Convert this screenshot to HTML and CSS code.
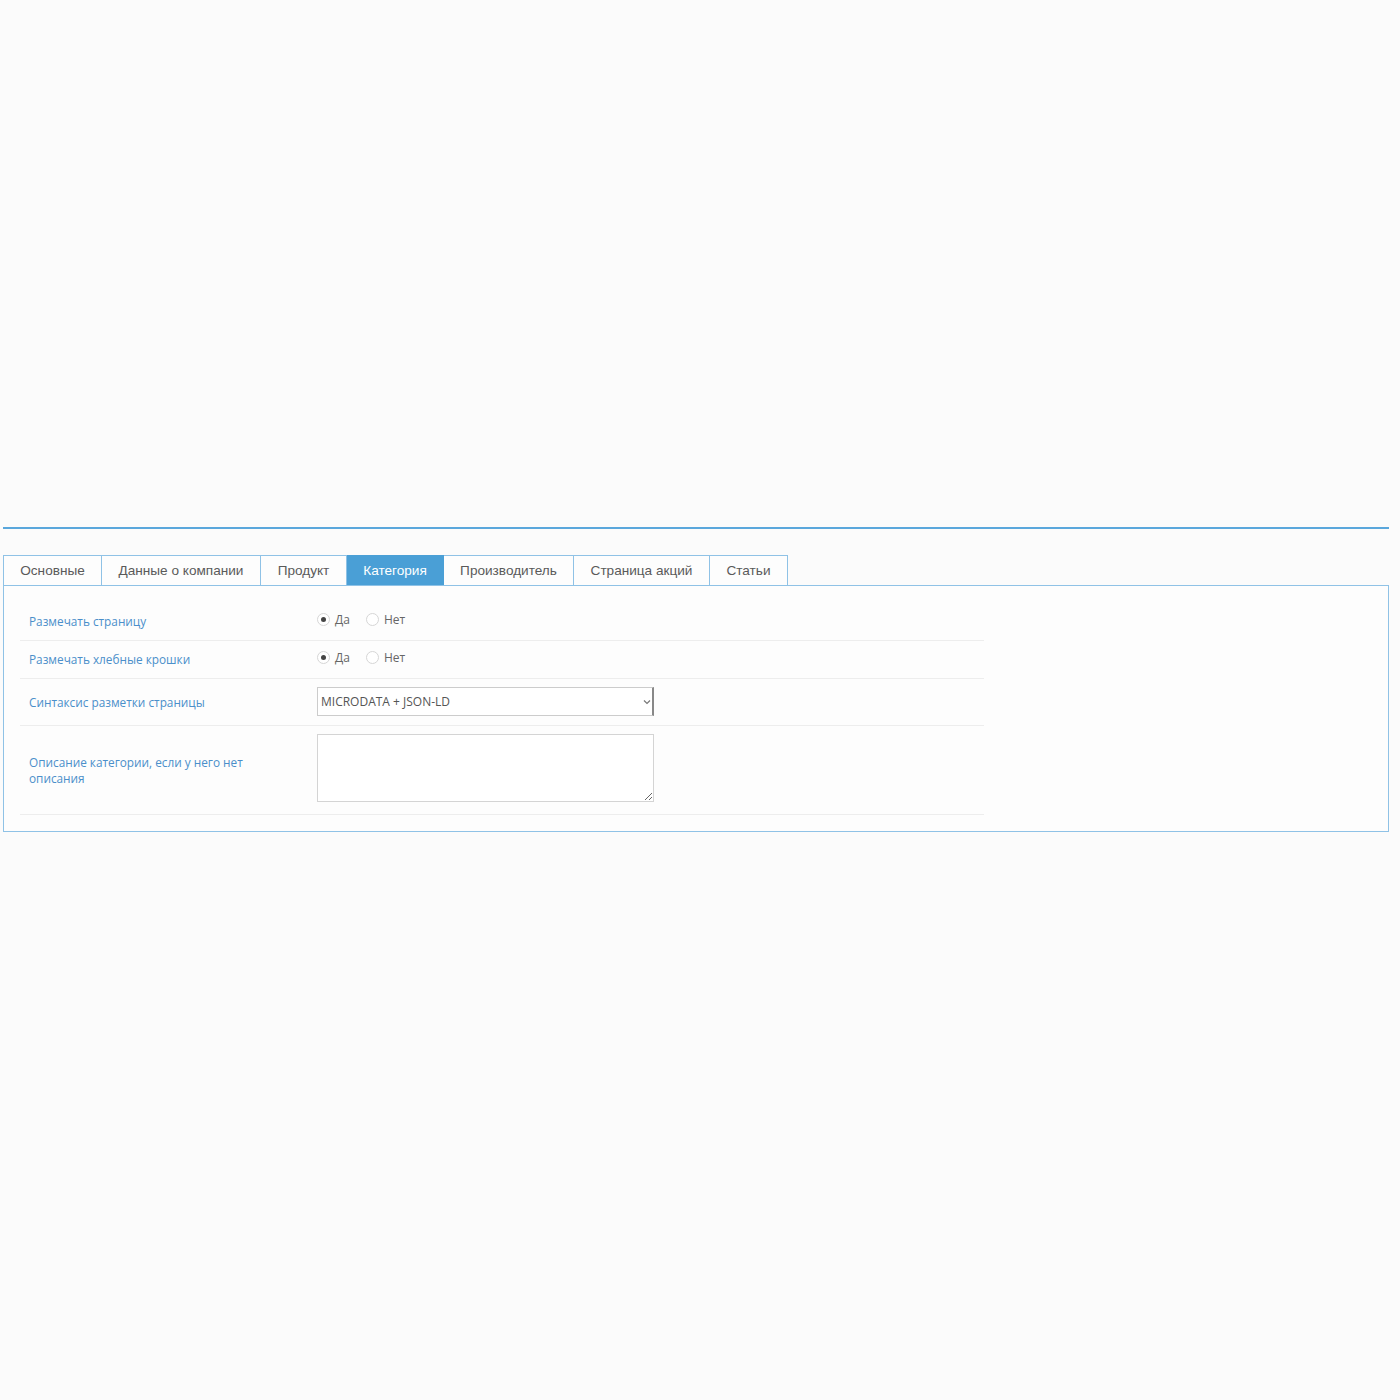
FILE: index.html
```html
<!DOCTYPE html>
<html lang="ru">
<head>
  <meta charset="UTF-8" />
  <title>Микроразметка – Категория</title>
  <link rel="stylesheet" href="styles.css">
</head>
<body>
  <div class="page">
    <div class="top-line"></div>

    <ul class="tabs">
      <li class="tab">Основные</li>
      <li class="tab">Данные о компании</li>
      <li class="tab">Продукт</li>
      <li class="tab active">Категория</li>
      <li class="tab">Производитель</li>
      <li class="tab">Страница акций</li>
      <li class="tab">Статьи</li>
    </ul>

    <div class="panel">
      <div class="form-row">
        <label class="row-label">Размечать страницу</label>
        <div class="row-field radios">
          <span class="radio checked"></span><span class="radio-text">Да</span>
          <span class="radio"></span><span class="radio-text">Нет</span>
        </div>
      </div>

      <div class="form-row">
        <label class="row-label">Размечать хлебные крошки</label>
        <div class="row-field radios">
          <span class="radio checked"></span><span class="radio-text">Да</span>
          <span class="radio"></span><span class="radio-text">Нет</span>
        </div>
      </div>

      <div class="form-row select-row">
        <label class="row-label">Синтаксис разметки страницы</label>
        <div class="row-field">
          <div class="select">
            <span>MICRODATA + JSON-LD</span>
            <svg class="chevron" width="8" height="6" viewBox="0 0 8 6">
              <path d="M1 1.5 L4 4.5 L7 1.5" fill="none" stroke="#777" stroke-width="1.2"/>
            </svg>
          </div>
        </div>
      </div>

      <div class="form-row tall">
        <label class="row-label">Описание категории, если у него нет описания</label>
        <div class="row-field">
          <textarea class="textarea"></textarea>
        </div>
      </div>
    </div>
  </div>
</body>
</html>
```

FILE: styles.css
```css
body {
  margin: 0;
  background: #fbfbfb;
  font-family: "Open Sans", Arial, sans-serif;
}

.page {
  padding: 527px 11px 0 3px;
}

.top-line {
  height: 2px;
  background: #5aa7dc;
  margin-bottom: 26px;
}

.tabs {
  list-style: none;
  margin: 0;
  padding: 0;
  display: flex;
}

.tab {
  height: 29px;
  line-height: 29px;
  padding: 0;
  text-align: center;
  border: 1px solid #8fc2e6;
  border-left: none;
  border-bottom: none;
  background: #fdfdfd;
  font-family: "Liberation Sans", Arial, sans-serif;
  font-size: 13.6px;
  color: #5a5a5a;
}

.tab:first-child {
  border-left: 1px solid #8fc2e6;
}

.tab:nth-child(1) { width: 97px; }
.tab:nth-child(2) { width: 158px; }
.tab:nth-child(3) { width: 85px; }
.tab:nth-child(4) { width: 96px; }
.tab:nth-child(5) { width: 129px; }
.tab:nth-child(6) { width: 135px; }
.tab:nth-child(7) { width: 77px; }

.tab.active {
  background: #4a9fd6;
  border-color: #4a9fd6;
  color: #fff;
}

.panel {
  border: 1px solid #8fc2e6;
  background: #fdfdfd;
  padding: 17px 0 16px 16px;
}

.form-row {
  width: 964px;
  display: grid;
  grid-template-columns: 297px 1fr;
  align-items: center;
  border-bottom: 1px solid #ededed;
  padding: 9px 0 8px;
  min-height: 20px;
}

.form-row.select-row {
  padding: 8px 0 9px;
}

.form-row.tall {
  padding: 8px 0 12px;
}

.row-label {
  padding-left: 9px;
  width: 240px;
  margin-top: -2px;
  font-size: 11.8px;
  line-height: 16px;
  color: #4b8fca;
}

.form-row.select-row .row-label {
  margin-top: 0;
}

.form-row.tall .row-label {
  margin-top: 4px;
}

.radios {
  display: flex;
  align-items: center;
  font-size: 12px;
  color: #666;
  position: relative;
  top: -3px;
}

.radio {
  width: 11px;
  height: 11px;
  border: 1px solid #d6d6d6;
  border-radius: 50%;
  background: #fff;
  position: relative;
  margin-right: 5px;
}

.radio.checked::after {
  content: "";
  position: absolute;
  left: 3px;
  top: 3px;
  width: 5px;
  height: 5px;
  border-radius: 50%;
  background: #444;
}

.radio-text {
  margin-right: 16px;
}

.select {
  width: 330px;
  height: 27px;
  border: 1px solid #ccc;
  border-right: 2px solid #888;
  background: #fff;
  display: flex;
  align-items: center;
  justify-content: space-between;
  padding: 0 1px 0 3px;
  font-size: 12px;
  color: #555;
}

.chevron {
  margin-top: 1px;
}

.textarea {
  display: block;
  width: 337px;
  height: 68px;
  box-sizing: border-box;
  border: 1px solid #d4d4d4;
  background: #fff;
  margin: 0;
  resize: vertical;
}
```
